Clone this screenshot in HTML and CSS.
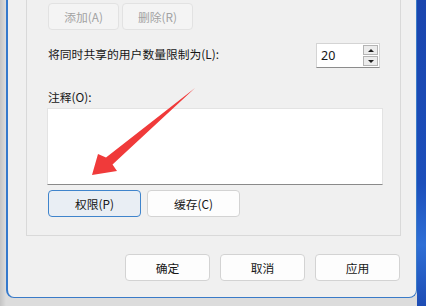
FILE: index.html
```html
<!DOCTYPE html>
<html lang="zh-CN">
<head>
<meta charset="utf-8">
<title>高级共享</title>
<link rel="stylesheet" href="styles.css">
</head>
<body>
<div class="screen">
  <div class="behind">
    <div class="dialog">
      <div class="group">
        <div class="row top-buttons">
          <button class="btn disabled">添加(A)</button>
          <button class="btn disabled">删除(R)</button>
        </div>
        <div class="row limit">
          <span class="label">将同时共享的用户数量限制为(L):</span>
          <div class="spin">
            <span class="spin-value">20</span>
            <div class="spin-buttons">
              <span class="spin-btn"><span class="tri-up"></span></span>
              <span class="spin-btn"><span class="tri-down"></span></span>
            </div>
          </div>
        </div>
        <div class="label comment-label">注释(O):</div>
        <div class="textarea"></div>
        <div class="row bottom-buttons">
          <button class="btn focused">权限(P)</button>
          <button class="btn">缓存(C)</button>
        </div>
      </div>
      <div class="dialog-buttons">
        <button class="btn action">确定</button>
        <button class="btn action">取消</button>
        <button class="btn action">应用</button>
      </div>
    </div>
  </div>
  <div class="wallpaper"></div>
</div>
<svg class="arrow" width="426" height="306" viewBox="0 0 426 306">
  <polygon points="195,88 112.5,164.5 117,171 92,175 98,154 106,157.5" fill="#f03a3a"/>
</svg>
</body>
</html>
```

FILE: styles.css
```css
* { box-sizing: border-box; }

html, body {
  margin: 0;
  padding: 0;
}

body {
  width: 426px;
  height: 306px;
  overflow: hidden;
  position: relative;
  font-family: "Noto Sans CJK SC", "Noto Sans", sans-serif;
  font-size: 11.8px;
  color: #161616;
}

.screen {
  display: flex;
  width: 426px;
  height: 306px;
}

.behind {
  width: 417px;
  height: 306px;
  padding-left: 6px;
  padding-bottom: 8px;
  background: linear-gradient(90deg, #c4c4c4 0px, #d4d4d4 4px, #dcdcdc 6px);
  background-color: #d8d8d8;
}

.dialog {
  width: 411px;
  height: 298px;
  background: #f0f0f0;
  border-left: 2px solid #3479cc;
  border-right: 1px solid #3a7bc8;
  border-bottom: 1px solid #3a7bc8;
  border-bottom-left-radius: 8px;
  border-bottom-right-radius: 8px;
  display: flex;
  flex-direction: column;
}

.wallpaper {
  width: 9px;
  height: 306px;
  background: linear-gradient(180deg, #1a45ae 0%, #1c4fbb 60%, #2f6fd6 80%, #1d4cb4 100%);
}

.group {
  margin-left: 18px;
  margin-right: 15px;
  padding: 3px 20px 18px 21px;
  border: 1px solid #d9d9d9;
  border-top: none;
  display: flex;
  flex-direction: column;
}

.row {
  display: flex;
}

.top-buttons {
  gap: 3px;
}

.btn {
  font-family: inherit;
  font-size: 11.8px;
  color: #161616;
  height: 27px;
  padding: 0;
  background: #fdfdfd;
  border: 1px solid #d3d3d3;
  border-radius: 4px;
  display: flex;
  align-items: center;
  justify-content: center;
}

.top-buttons .btn {
  width: 71px;
}

.btn.disabled {
  background: #f4f4f4;
  border-color: #e2e2e2;
  color: #a2a2a2;
}

.limit {
  margin-top: 13px;
  height: 25px;
  justify-content: space-between;
  align-items: center;
}

.label {
  line-height: 16px;
}

.limit .label {
  margin-bottom: 3px;
}

.spin {
  display: flex;
  width: 64px;
  height: 25px;
  background: #ffffff;
  border: 1px solid #d4d4d4;
  border-bottom-color: #8c8c8c;
}

.spin-value {
  flex: 1;
  padding-left: 4px;
  line-height: 23px;
  font-family: "Noto Sans", "Noto Sans CJK SC", sans-serif;
  font-size: 12.5px;
}

.spin-buttons {
  width: 16px;
  display: flex;
  flex-direction: column;
  gap: 1px;
  padding: 1px 1px 1px 0;
}

.spin-btn {
  flex: 1;
  background: #ececec;
  border: 1px solid #b4b4b4;
  display: flex;
  align-items: center;
  justify-content: center;
}

.tri-up {
  width: 0;
  height: 0;
  border-left: 3px solid transparent;
  border-right: 3px solid transparent;
  border-bottom: 3px solid #202020;
}

.tri-down {
  width: 0;
  height: 0;
  border-left: 3px solid transparent;
  border-right: 3px solid transparent;
  border-top: 3px solid #202020;
}

.comment-label {
  margin-top: 21px;
}

.textarea {
  margin-top: 3px;
  margin-left: -1px;
  margin-right: -3px;
  height: 77px;
  background: #ffffff;
  border: 1px solid #e3e3e3;
  border-bottom-color: #8a8a8a;
}

.bottom-buttons {
  margin-top: 5px;
  gap: 6px;
}

.bottom-buttons .btn {
  width: 93px;
}

.btn.focused {
  background: #e9eef4;
  border-color: #3f84cc;
}

.dialog-buttons {
  margin-top: 18px;
  padding-right: 16px;
  display: flex;
  justify-content: flex-end;
  gap: 10px;
}

.btn.action {
  width: 85px;
}

.arrow {
  position: absolute;
  left: 0;
  top: 0;
  pointer-events: none;
}
```
